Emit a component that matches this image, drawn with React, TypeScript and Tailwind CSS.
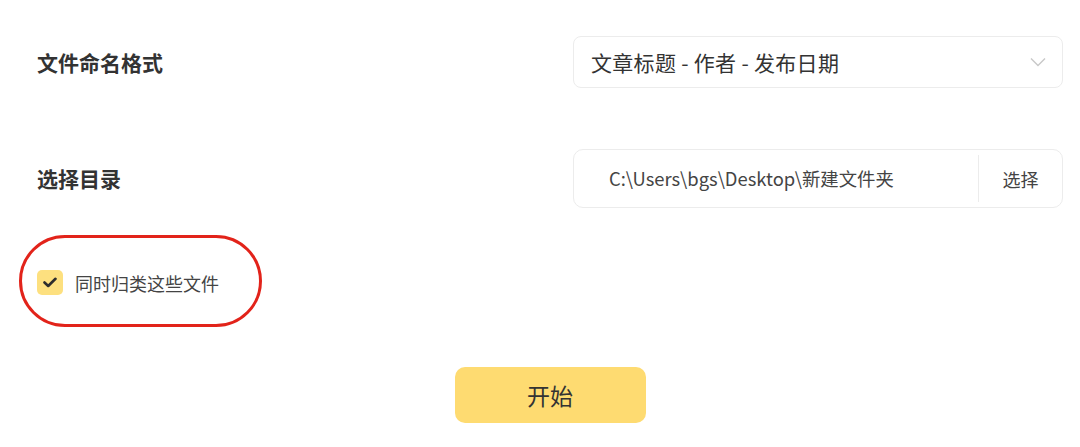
import React, { useState } from 'react';

const font = { fontFamily: '"Noto Sans CJK SC", "Noto Sans", sans-serif' };

export default function App() {
  const [format] = useState('文章标题 - 作者 - 发布日期');
  const [dir] = useState('C:\\Users\\bgs\\Desktop\\新建文件夹');
  const [groupFiles, setGroupFiles] = useState(true);

  return (
    <div className="w-[1080px] h-[447px] bg-white pl-[37px] pr-[17px] pt-[36px] text-[#333]" style={font}>
      {/* File naming format */}
      <div className="flex items-center justify-between">
        <div className="text-[21px] font-bold leading-none">文件命名格式</div>
        <div className="w-[490px] h-[52px] border border-[#ececec] rounded-lg flex items-center justify-between pl-[17px] pr-[16px]">
          <span className="text-[21px] leading-none tracking-[0.3px]">{format}</span>
          <svg width="16" height="10" viewBox="0 0 16 10" fill="none">
            <path d="M1 1.5 L8 8.5 L15 1.5" stroke="#c8c8c8" strokeWidth="1.4" />
          </svg>
        </div>
      </div>

      {/* Directory */}
      <div className="flex items-center justify-between mt-[61px]">
        <div className="text-[21px] font-bold leading-none">选择目录</div>
        <div className="w-[490px] h-[59px] border border-[#ececec] rounded-[10px] flex items-center">
          <span className="flex-1 pl-[35px] text-[18.4px] leading-none text-[#444]">{dir}</span>
          <div className="w-px h-[47px] bg-[#ececec]" />
          <button className="w-[83px] text-[18px] leading-none text-[#444]">选择</button>
        </div>
      </div>

      {/* Group files checkbox */}
      <div className="mt-[27px] -ml-[18px] w-[243px] h-[92px] border-[3px] border-[#e2231a] rounded-full flex items-center pl-[15px] pt-[3px]">
        <label className="flex items-center gap-[12px] cursor-pointer" onClick={() => setGroupFiles(!groupFiles)}>
          <span className="w-[26px] h-[25px] rounded-[5px] bg-[#fde07f] flex items-center justify-center">
            {groupFiles && (
              <svg width="14" height="11" viewBox="0 0 14 11" fill="none">
                <path d="M1.5 5.5 L5.2 9 L12.5 1.8" stroke="#2d2d2d" strokeWidth="2.6" strokeLinecap="round" strokeLinejoin="round" />
              </svg>
            )}
          </span>
          <span className="text-[18px] leading-none text-[#444]">同时归类这些文件</span>
        </label>
      </div>

      {/* Start */}
      <div className="flex justify-center mt-[40px]">
        <button className="w-[191px] h-[56px] rounded-[10px] bg-[#fedb71] text-[23px] text-[#333]">开始</button>
      </div>
    </div>
  );
}
